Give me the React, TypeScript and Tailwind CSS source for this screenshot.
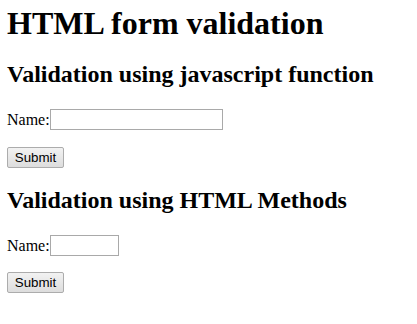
export default function App() {
  return (
    <div className="min-h-[324px] bg-white px-[7px] text-black font-['Liberation_Serif','Times_New_Roman',serif]">
      <h1 className="pt-[5px] text-[32px] leading-[37px] font-bold">HTML form validation</h1>

      <h2 className="mt-[18px] text-[24px] leading-[28px] font-bold">
        Validation using javascript function
      </h2>
      <form className="mt-[21px]" onSubmit={(e) => e.preventDefault()}>
        <div className="flex items-center text-[16px] leading-[21px]">
          <label>Name:</label>
          <input
            type="text"
            className="h-[21px] w-[173px] border border-[#a9a9a9] bg-white px-[2px] text-[13px]"
          />
        </div>
        <button
          type="submit"
          className="mt-[17px] h-[21px] w-[57px] rounded-[2px] border border-[#acacac] bg-gradient-to-b from-[#f2f2f2] to-[#dddddd] font-['Liberation_Sans',Arial,sans-serif] text-[13.33px] leading-[19px] text-black"
        >
          Submit
        </button>
      </form>

      <h2 className="mt-[17px] text-[24px] leading-[28px] font-bold">
        Validation using HTML Methods
      </h2>
      <form className="mt-[21px]" onSubmit={(e) => e.preventDefault()}>
        <div className="flex items-center text-[16px] leading-[21px]">
          <label>Name:</label>
          <input
            type="text"
            required
            className="h-[21px] w-[69px] border border-[#a9a9a9] bg-white px-[2px] text-[13px]"
          />
        </div>
        <button
          type="submit"
          className="mt-[16px] h-[21px] w-[57px] rounded-[2px] border border-[#acacac] bg-gradient-to-b from-[#f2f2f2] to-[#dddddd] font-['Liberation_Sans',Arial,sans-serif] text-[13.33px] leading-[19px] text-black"
        >
          Submit
        </button>
      </form>
    </div>
  );
}
